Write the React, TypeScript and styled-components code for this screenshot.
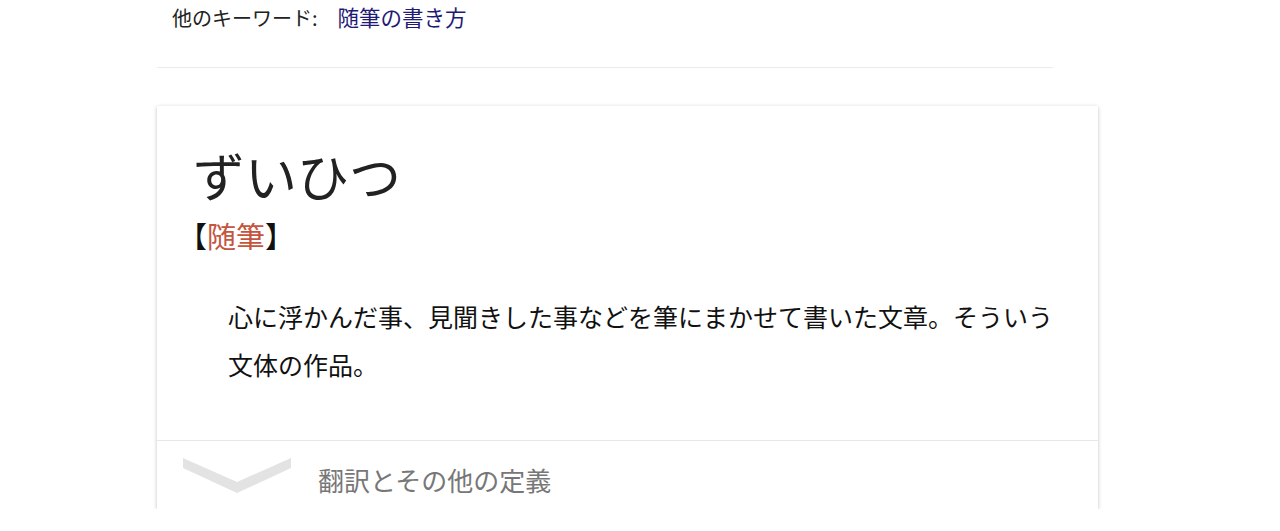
import styled, { createGlobalStyle } from "styled-components";

const GlobalStyle = createGlobalStyle`
  body {
    margin: 0;
    background: #fff;
    font-family: "Noto Sans CJK JP", "Noto Sans", sans-serif;
  }
`

const Page = styled.div`
  padding-left: 157px;
`

const KeywordBar = styled.div`
  width: 881px;
  height: 67px;
  padding-left: 15px;
  line-height: 34px;
  font-size: 20px;
  color: #222;
  border-bottom: 1px solid #ebebeb;

  a {
    margin-left: 20px;
    font-size: 21.5px;
    color: #1f1a74;
    text-decoration: none;
  }
`

const Card = styled.div`
  width: 941px;
  margin-top: 38px;
  background: #fff;
  box-shadow: 0 1px 4px rgba(0, 0, 0, .24);
`

const Main = styled.div`
  padding: 39px 30px 52px 36px;
`

const Title = styled.h1`
  margin: 0;
  font-size: 52px;
  font-weight: 400;
  line-height: 60px;
  color: #222;
`

const Reading = styled.div`
  margin: 10px 0 0 -15px;
  font-size: 29px;
  line-height: 40px;
  color: #111;

  span {
    color: #c4553e;
  }
`

const Definition = styled.p`
  margin: 37px 0 0 35px;
  font-size: 25px;
  line-height: 48px;
  color: #111;
`

const Footer = styled.div`
  display: flex;
  align-items: center;
  height: 69px;
  border-top: 1px solid #e8e8e8;
  padding-left: 26px;
  box-sizing: border-box;
  padding-top: 8px;
`

const Chevron = styled.svg`
  width: 108px;
  height: 36px;
  margin-top: -6px;
  flex-shrink: 0;
`

const FooterText = styled.span`
  margin-left: 27px;
  font-size: 26px;
  color: #777;
`

export default function App() {
  return (
    <Page>
      <GlobalStyle />
      <KeywordBar>
        他のキーワード:<a href="#">随筆の書き方</a>
      </KeywordBar>
      <Card>
        <Main>
          <Title>ずいひつ</Title>
          <Reading>【<span>随筆</span>】</Reading>
          <Definition>
            心に浮かんだ事、見聞きした事などを筆にまかせて書いた文章。そういう文体の作品。
          </Definition>
        </Main>
        <Footer>
          <Chevron viewBox="0 0 108 36">
            <polygon points="0,0 54,24 108,0 108,10 54,35 0,10" fill="#e3e3e3" />
          </Chevron>
          <FooterText>翻訳とその他の定義</FooterText>
        </Footer>
      </Card>
    </Page>
  )
}
